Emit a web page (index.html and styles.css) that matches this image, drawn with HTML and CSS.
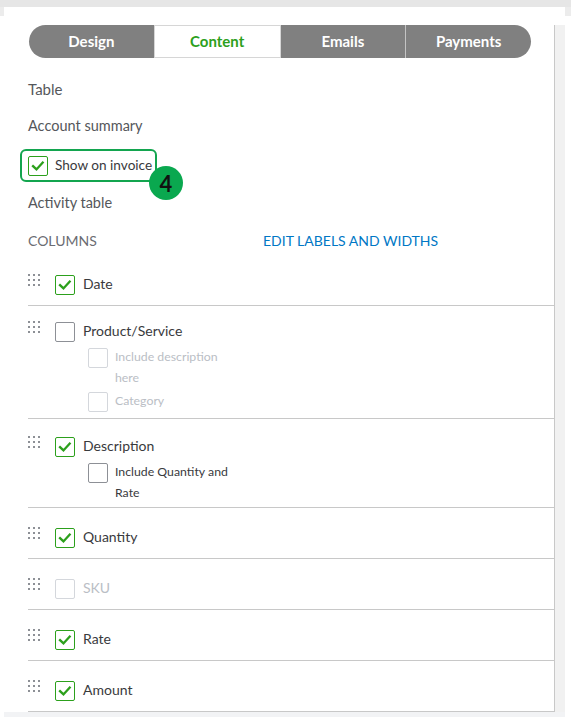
FILE: index.html
```html
<!DOCTYPE html>
<html>
<head>
<meta charset="utf-8">
<link rel="stylesheet" href="styles.css">
</head>
<body>
<div class="topbar"></div>
<div class="band"><div class="band-fill"></div></div>
<div class="stage">
  <div class="panel">
    <div class="tabs">
      <div class="tab">Design</div>
      <div class="tab active">Content</div>
      <div class="tab">Emails</div>
      <div class="tab divided">Payments</div>
    </div>

    <div class="section-title">Table</div>
    <div class="sub-title">Account summary</div>

    <div class="show-row">
      <span class="cb checked"><svg viewBox="0 0 20 20"><path d="M4.5 10.2 L8.3 13.8 L15.2 6.2"/></svg></span>
      <span class="show-label">Show on invoice</span>
      <span class="highlight"></span>
      <span class="badge">4</span>
    </div>

    <div class="sub-title activity">Activity table</div>

    <div class="columns-head">
      <span class="columns-label">COLUMNS</span>
      <span class="edit-link">EDIT LABELS AND WIDTHS</span>
    </div>

    <div class="rows">
      <div class="row">
        <span class="handle"><svg viewBox="0 0 13 13"><g><rect x="0" y="0" width="2" height="2"/><rect x="5" y="0" width="2" height="2"/><rect x="10" y="0" width="2" height="2"/><rect x="0" y="5" width="2" height="2"/><rect x="5" y="5" width="2" height="2"/><rect x="10" y="5" width="2" height="2"/><rect x="0" y="10" width="2" height="2"/><rect x="5" y="10" width="2" height="2"/><rect x="10" y="10" width="2" height="2"/></g></svg></span>
        <div class="row-body">
          <div class="main"><span class="cb checked"><svg viewBox="0 0 20 20"><path d="M4.5 10.2 L8.3 13.8 L15.2 6.2"/></svg></span><span class="label">Date</span></div>
        </div>
      </div>

      <div class="row row-product">
        <span class="handle"><svg viewBox="0 0 13 13"><g><rect x="0" y="0" width="2" height="2"/><rect x="5" y="0" width="2" height="2"/><rect x="10" y="0" width="2" height="2"/><rect x="0" y="5" width="2" height="2"/><rect x="5" y="5" width="2" height="2"/><rect x="10" y="5" width="2" height="2"/><rect x="0" y="10" width="2" height="2"/><rect x="5" y="10" width="2" height="2"/><rect x="10" y="10" width="2" height="2"/></g></svg></span>
        <div class="row-body">
          <div class="main"><span class="cb"></span><span class="label">Product/Service</span></div>
          <div class="subs">
            <div class="sub disabled"><span class="cb small"></span><span class="sub-label">Include description here</span></div>
            <div class="sub disabled"><span class="cb small"></span><span class="sub-label">Category</span></div>
          </div>
        </div>
      </div>

      <div class="row row-desc">
        <span class="handle"><svg viewBox="0 0 13 13"><g><rect x="0" y="0" width="2" height="2"/><rect x="5" y="0" width="2" height="2"/><rect x="10" y="0" width="2" height="2"/><rect x="0" y="5" width="2" height="2"/><rect x="5" y="5" width="2" height="2"/><rect x="10" y="5" width="2" height="2"/><rect x="0" y="10" width="2" height="2"/><rect x="5" y="10" width="2" height="2"/><rect x="10" y="10" width="2" height="2"/></g></svg></span>
        <div class="row-body">
          <div class="main"><span class="cb checked"><svg viewBox="0 0 20 20"><path d="M4.5 10.2 L8.3 13.8 L15.2 6.2"/></svg></span><span class="label">Description</span></div>
          <div class="subs">
            <div class="sub"><span class="cb small"></span><span class="sub-label">Include Quantity and Rate</span></div>
          </div>
        </div>
      </div>

      <div class="row">
        <span class="handle"><svg viewBox="0 0 13 13"><g><rect x="0" y="0" width="2" height="2"/><rect x="5" y="0" width="2" height="2"/><rect x="10" y="0" width="2" height="2"/><rect x="0" y="5" width="2" height="2"/><rect x="5" y="5" width="2" height="2"/><rect x="10" y="5" width="2" height="2"/><rect x="0" y="10" width="2" height="2"/><rect x="5" y="10" width="2" height="2"/><rect x="10" y="10" width="2" height="2"/></g></svg></span>
        <div class="row-body">
          <div class="main"><span class="cb checked"><svg viewBox="0 0 20 20"><path d="M4.5 10.2 L8.3 13.8 L15.2 6.2"/></svg></span><span class="label">Quantity</span></div>
        </div>
      </div>

      <div class="row row-disabled">
        <span class="handle"><svg viewBox="0 0 13 13"><g><rect x="0" y="0" width="2" height="2"/><rect x="5" y="0" width="2" height="2"/><rect x="10" y="0" width="2" height="2"/><rect x="0" y="5" width="2" height="2"/><rect x="5" y="5" width="2" height="2"/><rect x="10" y="5" width="2" height="2"/><rect x="0" y="10" width="2" height="2"/><rect x="5" y="10" width="2" height="2"/><rect x="10" y="10" width="2" height="2"/></g></svg></span>
        <div class="row-body">
          <div class="main"><span class="cb"></span><span class="label">SKU</span></div>
        </div>
      </div>

      <div class="row">
        <span class="handle"><svg viewBox="0 0 13 13"><g><rect x="0" y="0" width="2" height="2"/><rect x="5" y="0" width="2" height="2"/><rect x="10" y="0" width="2" height="2"/><rect x="0" y="5" width="2" height="2"/><rect x="5" y="5" width="2" height="2"/><rect x="10" y="5" width="2" height="2"/><rect x="0" y="10" width="2" height="2"/><rect x="5" y="10" width="2" height="2"/><rect x="10" y="10" width="2" height="2"/></g></svg></span>
        <div class="row-body">
          <div class="main"><span class="cb checked"><svg viewBox="0 0 20 20"><path d="M4.5 10.2 L8.3 13.8 L15.2 6.2"/></svg></span><span class="label">Rate</span></div>
        </div>
      </div>

      <div class="row">
        <span class="handle"><svg viewBox="0 0 13 13"><g><rect x="0" y="0" width="2" height="2"/><rect x="5" y="0" width="2" height="2"/><rect x="10" y="0" width="2" height="2"/><rect x="0" y="5" width="2" height="2"/><rect x="5" y="5" width="2" height="2"/><rect x="10" y="5" width="2" height="2"/><rect x="0" y="10" width="2" height="2"/><rect x="5" y="10" width="2" height="2"/><rect x="10" y="10" width="2" height="2"/></g></svg></span>
        <div class="row-body">
          <div class="main"><span class="cb checked"><svg viewBox="0 0 20 20"><path d="M4.5 10.2 L8.3 13.8 L15.2 6.2"/></svg></span><span class="label">Amount</span></div>
        </div>
      </div>
    </div>
  </div>
  <div class="rail"></div>
</div>
<div class="foot"></div>
</body>
</html>
```
FILE: styles.css
```css
* { box-sizing: border-box; }

body {
  margin: 0;
  background: #ffffff;
  font-family: Lato, "Open Sans", "Liberation Sans", sans-serif;
  color: #393a3d;
}

.topbar {
  height: 7px;
  background: #e6e6e6;
}

.band {
  height: 9px;
  background: #ececec;
}
.band-fill {
  height: 9px;
  margin-left: 4px;
  width: 561px;
  background: #ffffff;
}

.stage {
  display: flex;
  margin-left: 4px;
  width: 561px;
  margin-top: 9px;
}

.panel {
  width: 551px;
  padding-left: 24px;
  border-right: 1px solid #c8c8c8;
  background: #ffffff;
}

.rail {
  width: 10px;
  background: #f1f1f1;
}

.foot {
  margin-left: 4px;
  width: 561px;
  height: 5px;
  background: #f2f3f5;
}

/* Tabs */
.tabs {
  display: flex;
  margin-left: 1px;
  width: 502px;
  height: 33px;
  border-radius: 17px;
  overflow: hidden;
  background: #808080;
}
.tab {
  flex: 1;
  display: flex;
  align-items: center;
  justify-content: center;
  padding-bottom: 2px;
  color: #ffffff;
  font-weight: 700;
  font-size: 15px;
}
.tab.active {
  background: #ffffff;
  color: #2ca01c;
  border: 1px solid #d6d6d6;
}
.tab.divided {
  border-left: 1px solid #c4c4c4;
}

.section-title {
  margin-top: 21px;
  font-size: 15px;
  line-height: 20px;
  color: #55575b;
}
.sub-title {
  margin-top: 17px;
  font-size: 14.5px;
  line-height: 20px;
  color: #55575b;
}
.sub-title.activity {
  margin-top: 17px;
}

/* Checkbox */
.cb {
  display: inline-flex;
  flex: none;
  width: 20px;
  height: 20px;
  border: 1px solid #8d9096;
  border-radius: 2px;
  background: #ffffff;
}
.cb svg {
  width: 18px;
  height: 18px;
}
.cb svg path {
  fill: none;
  stroke: #2ca01c;
  stroke-width: 2.6;
  stroke-linecap: square;
}
.cb.checked {
  border-color: #2ca01c;
}

.show-row {
  position: relative;
  display: flex;
  align-items: center;
  gap: 7px;
  margin-top: 20px;
  height: 20px;
}
.show-label {
  font-size: 13.6px;
  line-height: 20px;
  padding-bottom: 2px;
  color: #393a3d;
}
.highlight {
  position: absolute;
  left: -8px;
  top: -7px;
  width: 137px;
  height: 33px;
  border: 2px solid #13a54f;
  border-radius: 6px;
}
.badge {
  position: absolute;
  left: 121px;
  top: 10px;
  width: 34px;
  height: 34px;
  border-radius: 50%;
  background: #0aa84f;
  color: #111111;
  font-weight: 700;
  font-size: 22px;
  display: flex;
  align-items: center;
  justify-content: center;
}

.columns-head {
  display: grid;
  grid-template-columns: 235px 1fr;
  margin-top: 18px;
  font-size: 14px;
  line-height: 20px;
}
.columns-label {
  color: #6b6c72;
}
.edit-link {
  color: #0077c5;
}

/* Rows */
.rows {
  margin-top: 4px;
}
.row {
  display: flex;
  align-items: flex-start;
  padding-top: 20px;
  padding-bottom: 10px;
  border-bottom: 1px solid #c8c8c8;
}
.row-product {
  padding-top: 16px;
  padding-bottom: 6px;
}
.row-desc {
  padding-top: 18px;
  padding-bottom: 3px;
}
.handle {
  flex: none;
  width: 13px;
  height: 13px;
  margin-top: -1px;
  margin-right: 14px;
  display: flex;
}
.handle svg {
  width: 13px;
  height: 13px;
  fill: #8d9096;
}
.row-body {
  display: flex;
  flex-direction: column;
}
.main {
  display: flex;
  align-items: center;
  gap: 8px;
  height: 20px;
}
.label {
  font-size: 14px;
  line-height: 20px;
  padding-bottom: 3px;
  color: #393a3d;
}
.row-disabled .cb {
  border-color: #d4d7dc;
}
.row-disabled .label {
  color: #babec5;
}

.subs {
  display: flex;
  flex-direction: column;
  gap: 2px;
  margin-top: 5px;
  margin-left: 33px;
}
.sub {
  display: flex;
  align-items: flex-start;
  gap: 7px;
}
.sub .cb {
  margin-top: 1px;
}
.sub-label {
  width: 122px;
  font-size: 12.3px;
  line-height: 21px;
  margin-top: -1px;
  margin-bottom: 1px;
  color: #393a3d;
}
.sub.disabled .cb {
  border-color: #d4d7dc;
}
.sub.disabled .sub-label {
  color: #babec5;
}
```
